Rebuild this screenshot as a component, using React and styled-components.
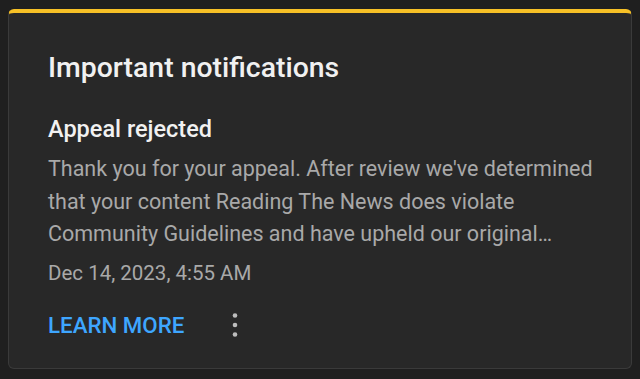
import React from 'react';
import styled, { createGlobalStyle } from 'styled-components';

const GlobalStyle = createGlobalStyle`
    html, body {
        margin: 0;
        padding: 0;
        background: #1f1f1f;
        font-family: Roboto, "Noto Sans", sans-serif;
    }
`;

const Page = styled.div`
    width: 640px;
    height: 379px;
    padding: 9px 8px 10px 8px;
    box-sizing: border-box;
`;

const Card = styled.div`
    height: 100%;
    box-sizing: border-box;
    background: #282828;
    border: 1px solid #3a3a3a;
    border-top: 4px solid #f6c026;
    border-radius: 6px;
    padding: 38px 30px 0 39px;
    display: flex;
    flex-direction: column;
`;

const Title = styled.h1`
    margin: 0;
    font-size: 28.4px;
    font-weight: 500;
    color: #f1f1f1;
    line-height: 34px;
`;

const Heading = styled.h2`
    margin: 30px 0 0 0;
    font-size: 23.5px;
    font-weight: 500;
    color: #f1f1f1;
    line-height: 28px;
`;

const Body = styled.p`
    margin: 10px 0 0 0;
    font-size: 21.5px;
    line-height: 32.5px;
    color: #a9a9a9;
`;

const Date = styled.div`
    margin-top: 7px;
    font-size: 20.5px;
    line-height: 30px;
    color: #a9a9a9;
`;

const Actions = styled.div`
    display: flex;
    align-items: center;
    gap: 39px;
    margin-top: 22px;
`;

const LearnMore = styled.button`
    background: none;
    border: none;
    padding: 0;
    font-family: inherit;
    font-size: 22.3px;
    font-weight: 500;
    color: #3ea6ff;
    cursor: pointer;
`;

const MenuButton = styled.button`
    background: none;
    border: none;
    padding: 0;
    display: flex;
    cursor: pointer;
`;

export default function App() {
    return (
        <Page>
            <GlobalStyle />
            <Card>
                <Title>Important notifications</Title>
                <Heading>Appeal rejected</Heading>
                <Body>
                    Thank you for your appeal. After review we've determined that your content Reading The News does violate Community Guidelines and have upheld our original…
                </Body>
                <Date>Dec 14, 2023, 4:55 AM</Date>
                <Actions>
                    <LearnMore>LEARN MORE</LearnMore>
                    <MenuButton>
                        <svg width="24" height="30" viewBox="0 0 24 30">
                            <circle cx="12" cy="5.5" r="2.3" fill="#bdbdbd" />
                            <circle cx="12" cy="15" r="2.3" fill="#bdbdbd" />
                            <circle cx="12" cy="24.5" r="2.3" fill="#bdbdbd" />
                        </svg>
                    </MenuButton>
                </Actions>
            </Card>
        </Page>
    );
}
